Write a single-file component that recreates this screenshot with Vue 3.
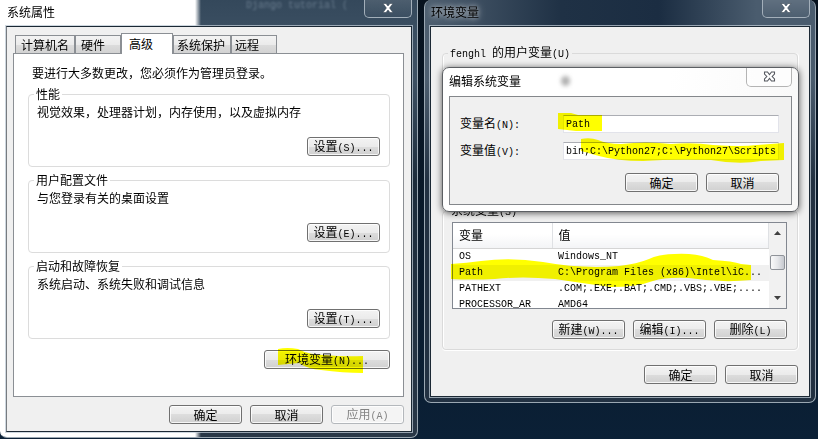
<script setup>
import { ref, onMounted } from 'vue'

const tabs = ['计算机名', '硬件', '高级', '系统保护', '远程']
const activeTab = ref('高级')

const groups = [
  { title: '性能', text: '视觉效果，处理器计划，内存使用，以及虚拟内存', key: 'S' },
  { title: '用户配置文件', text: '与您登录有关的桌面设置', key: 'E' },
  { title: '启动和故障恢复', text: '系统启动、系统失败和调试信息', key: 'T' }
]

const variables = [
  { name: 'OS', value: 'Windows_NT' },
  { name: 'Path', value: 'C:\\Program Files (x86)\\Intel\\iC...' },
  { name: 'PATHEXT', value: '.COM;.EXE;.BAT;.CMD;.VBS;.VBE;....' },
  { name: 'PROCESSOR_AR', value: 'AMD64' }
]
const selected = ref('Path')

const varName = ref('Path')
const varValue = ref('.bin;C:\\Python27;C:\\Python27\\Scripts')
const valueBox = ref(null)

// Show the end of a long value, where new entries are appended.
onMounted(() => {
  valueBox.value.scrollLeft = valueBox.value.scrollWidth
})
</script>

<template>
  <main class="desktop">
    <section class="window props">
      <header class="titlebar">
        <h1>系统属性</h1>
        <span class="ghost" aria-hidden="true">Django tutorial (</span>
        <button class="close" aria-label="关闭">
          <svg width="12" height="10" viewBox="0 0 12 10"><path d="M1 .5h3L6 3 8 .5h3L7.6 5 11 9.500H8L6 7 4 9.500H1L4.400 5z" fill="#fff" stroke="#3d4a58" stroke-width=".6" /></svg>
        </button>
      </header>
      <div class="client props-client">
        <nav class="tabs">
          <button
            v-for="t in tabs"
            :key="t"
            class="tab"
            :class="{ active: t === activeTab }"
            @click="activeTab = t"
          >{{ t }}</button>
        </nav>
        <div class="panel">
          <p class="note">要进行大多数更改，您必须作为管理员登录。</p>
          <div class="groups">
            <fieldset v-for="g in groups" :key="g.key" class="group">
              <legend>{{ g.title }}</legend>
              <p>{{ g.text }}</p>
              <div class="row">
                <button class="btn">设置<span class="latin">({{ g.key }})...</span></button>
              </div>
            </fieldset>
          </div>
          <div class="row env-row">
            <div class="marked">
              <button class="btn wide">环境变量<span class="latin">(N)...</span></button>
              <svg class="marker env-marker" width="88" height="28" viewBox="0 0 88 28">
                <path d="M1 2Q10 0 21 2Q32 8 48 8Q66 10 86 9V26Q66 26 44 23Q31 22 22 16L1 18z" fill="#ff0" />
              </svg>
            </div>
          </div>
        </div>
        <footer class="row props-footer">
          <button class="btn">确定</button>
          <button class="btn">取消</button>
          <button class="btn" disabled>应用<span class="latin">(A)</span></button>
        </footer>
      </div>
    </section>

    <section class="window env">
      <header class="titlebar">
        <h1>环境变量</h1>
        <button class="close" aria-label="关闭">
          <svg width="12" height="10" viewBox="0 0 12 10"><path d="M1 .5h3L6 3 8 .5h3L7.6 5 11 9.500H8L6 7 4 9.500H1L4.400 5z" fill="#fff" stroke="#3d4a58" stroke-width=".6" /></svg>
        </button>
      </header>
      <div class="client env-client">
        <fieldset class="group user-vars">
          <legend><span class="latin">fenghl </span>的用户变量<span class="latin">(U)</span></legend>
        </fieldset>
        <fieldset class="group system-vars">
          <legend>系统变量<span class="latin">(S)</span></legend>
          <div class="list-wrap">
            <div class="list">
              <table>
                <thead>
                  <tr><th class="name-col">变量</th><th>值</th></tr>
                </thead>
                <tbody>
                  <tr
                    v-for="v in variables"
                    :key="v.name"
                    :class="{ selected: v.name === selected }"
                    @click="selected = v.name"
                  >
                    <td>{{ v.name }}</td>
                    <td>{{ v.value }}</td>
                  </tr>
                </tbody>
              </table>
              <div class="scrollbar">
                <svg width="7" height="4" viewBox="0 0 7 4"><path d="M0 4L3.500 0L7 4z" fill="#404040" /></svg>
                <span class="thumb"></span>
                <svg width="7" height="4" viewBox="0 0 7 4"><path d="M0 0L3.500 4L7 0z" fill="#404040" /></svg>
              </div>
            </div>
            <svg class="marker list-marker" width="302" height="36" viewBox="0 0 302 36">
              <path d="M0 11Q16 10 30 8Q60 4 92 9Q130 16 168 13Q186 11 198 6Q210 0 238 1Q252 2 262 7Q282 8 290 11L300 12V27Q270 30 238 25Q214 24 202 28Q186 34 160 34Q130 30 104 26Q70 23 44 26Q20 27 0 26z" fill="#ff0" />
            </svg>
          </div>
          <div class="row">
            <button class="btn">新建<span class="latin">(W)...</span></button>
            <button class="btn">编辑<span class="latin">(I)...</span></button>
            <button class="btn">删除<span class="latin">(L)</span></button>
          </div>
        </fieldset>
        <footer class="row env-footer">
          <button class="btn">确定</button>
          <button class="btn">取消</button>
        </footer>
      </div>

      <section class="dialog" role="dialog" aria-labelledby="edit-title">
        <header class="dialog-title">
          <h2 id="edit-title">编辑系统变量</h2>
          <i class="smudge"></i>
          <button class="close pale" aria-label="关闭">
            <svg width="13" height="11" viewBox="0 0 13 11"><path d="M1.500 1h3l2 2.500L8.500 1h3v2L9.200 5.500l2.300 2.500v2h-3L6.500 7.500 4.500 10h-3V8l2.300-2.500L1.500 3z" fill="#fff" stroke="#55585f" stroke-width="1.100" /></svg>
          </button>
        </header>
        <div class="dialog-body">
          <div class="fields">
            <label for="var-name">变量名<span class="latin">(N):</span></label>
            <div class="marked">
              <input id="var-name" v-model="varName" type="text">
              <svg class="marker name-marker" width="46" height="20" viewBox="0 0 46 20">
                <path d="M0 0H13L20 2H44V18H18L0 16z" fill="#ff0" />
              </svg>
            </div>
            <label for="var-value">变量值<span class="latin">(V):</span></label>
            <div class="marked">
              <input id="var-value" ref="valueBox" v-model="varValue" type="text">
              <svg class="marker value-marker" width="204" height="28" viewBox="0 0 204 28">
                <path d="M0 1Q9 -1 17 2Q26 6 40 6Q66 3 90 6Q112 4 132 7Q160 9 176 7L203 5V22L180 23Q158 27 130 22Q90 21 62 23Q36 23 18 18L0 13z" fill="#ff0" />
              </svg>
            </div>
          </div>
          <footer class="row">
            <button class="btn">确定</button>
            <button class="btn">取消</button>
          </footer>
        </div>
      </section>
    </section>
  </main>
</template>

<style>
body {
  margin: 0;
  background: #0b1e31;
}
</style>

<style scoped>
.desktop {
  display: grid;
  grid-template-columns: 418fr 392fr;
  align-items: start;
  column-gap: 6px;
  box-sizing: border-box;
  min-height: 100vh;
  padding-right: 2px;
  overflow: hidden;
  background: linear-gradient(#07121e, #0b2036);
  color: #000;
  font: 12px/14px "Noto Sans CJK SC", sans-serif;
}

.desktop *,
.desktop *::before {
  box-sizing: border-box;
}

h1,
h2,
p {
  margin: 0;
  font-size: 12px;
  font-weight: 400;
}

button,
input {
  font: inherit;
  color: inherit;
}

.latin,
td,
input {
  font-family: "Liberation Mono", monospace;
  font-size: 10px;
  white-space: pre;
}

.window {
  position: relative;
  min-width: 0;
  padding: 0 5px 5px;
  border: 1px solid #9aa7b2;
  border-top: 0;
  border-radius: 0 0 7px 7px;
}

.props {
  border-left-color: #fff;
  background:
    linear-gradient(90deg, #fff 194px, transparent 200px),
    linear-gradient(#34485b, #3a4e61 28px, #3e5163 80px, #1c2c3b 180px, #283747);
}

.env {
  border-radius: 7px;
  background:
    linear-gradient(transparent 80px, #223142 180px),
    linear-gradient(90deg, #4e5f70, #1f3145 35%, #1b2d42 60%, #4a5c6e 85%);
}

.titlebar {
  display: flex;
  align-items: flex-start;
  height: 26px;
}

.titlebar h1 {
  padding-top: 5px;
  padding-left: 1px;
  text-shadow: 0 0 5px rgba(255, 255, 255, 0.6), 0 0 9px rgba(255, 255, 255, 0.6);
}

.ghost {
  margin-right: 16px;
  margin-left: auto;
  color: #9aacbd;
  font: 10px/12px "Liberation Mono", monospace;
  filter: blur(1px);
  opacity: 0.5;
}

.close {
  display: flex;
  justify-content: center;
  align-items: center;
  width: 48px;
  height: 18px;
  margin-left: auto;
  padding: 0 0 2px;
  border: 1px solid #a3afba;
  border-top: 0;
  border-radius: 0 0 5px 5px;
  background: linear-gradient(rgba(255, 255, 255, 0.12), rgba(255, 255, 255, 0.02));
}

.ghost + .close {
  margin-left: 0;
}

.client {
  border: 1px solid #1b2834;
  background: #f0f0f0;
  box-shadow: 0 0 0 1px rgba(190, 202, 212, 0.75);
}

.props-client {
  padding: 6px 7px 7px 6px;
  border-left-color: #777b80;
}

.tabs {
  display: flex;
  align-items: flex-end;
  padding-left: 2px;
}

.tab {
  min-width: 46px;
  height: 18px;
  padding: 0 5px;
  border: 1px solid #8b8f94;
  border-bottom: 0;
  border-radius: 0;
  background: linear-gradient(#f3f3f3, #ebebeb 50%, #dddddd 50%, #d2d2d2);
  line-height: 18px;
  text-align: left;
}

.tab.active {
  position: relative;
  z-index: 1;
  min-width: 52px;
  height: 21px;
  margin-bottom: -1px;
  padding: 0 7px;
  background: #fff;
}

.tab.active ~ .tab {
  padding: 0 3px;
}

.tab.active + .tab {
  min-width: 58px;
}

.panel {
  padding: 12px 13px 27px 14px;
  border: 1px solid #8b8f94;
  background: #fff;
}

.note {
  padding-left: 4px;
}

.groups {
  display: grid;
  gap: 6px;
  margin-top: 7px;
}

.group {
  min-width: 0;
  margin: 0;
  padding: 4px 9px 10px 8px;
  border: 1px solid #dcdcdc;
  border-radius: 4px;
}

legend {
  margin-left: -3px;
  padding: 0 2px;
  line-height: 14px;
}

.group p {
  margin-bottom: 18px;
}

.row {
  display: flex;
  justify-content: flex-end;
  gap: 8px;
}

.btn {
  width: 73px;
  height: 19px;
  padding: 0;
  border: 1px solid #707070;
  border-radius: 3px;
  background: linear-gradient(#f3f3f3, #ebebeb 50%, #dddddd 50%, #d0d0d0);
  box-shadow: inset 0 0 0 1px rgba(255, 255, 255, 0.8);
  line-height: 16px;
  white-space: nowrap;
}

.btn:disabled {
  border-color: #b4b8bc;
  background: #f4f4f4;
  color: #838383;
}

.btn.wide {
  width: 126px;
}

.env-row {
  margin-top: 11px;
}

.marked {
  position: relative;
  display: flex;
}

.marker {
  position: absolute;
  mix-blend-mode: multiply;
  pointer-events: none;
}

.env-marker {
  top: -3px;
  left: 13px;
}

.props-footer {
  margin-top: 8px;
}

.env-client {
  display: grid;
  padding: 18px 11px 12px;
}

.user-vars {
  min-height: 150px;
  margin-bottom: 8px;
}

.env .group {
  border-color: #dadada;
  box-shadow: inset 1px 0 #fff, 1px 0 #fff, 0 1px #fff;
}

.env .system-vars {
  padding: 2px 10px 10px 9px;
}

.list-wrap {
  position: relative;
  margin-bottom: 11px;
}

.list {
  display: flex;
  height: 87px;
  overflow: hidden;
  border: 1px solid #828790;
  background: #fff;
}

table {
  flex: 1;
  width: 0;
  border-collapse: collapse;
  table-layout: fixed;
}

th {
  height: 25px;
  padding: 0 0 0 6px;
  border-right: 1px solid #dfe1e4;
  border-bottom: 1px solid #d5d5d5;
  background: linear-gradient(#fff 45%, #f3f4f6);
  font-weight: 400;
  text-align: left;
}

.name-col {
  width: 99px;
}

td {
  height: 16px;
  padding: 0 0 0 6px;
  overflow: hidden;
  line-height: 16px;
}

.selected td {
  background: #f0f0f0;
}

.scrollbar {
  display: flex;
  flex-direction: column;
  align-items: center;
  justify-content: space-between;
  width: 17px;
  padding: 8px 0;
  background: #f1f1f1;
}

.thumb {
  width: 15px;
  height: 15px;
  margin-bottom: 6px;
  border: 1px solid #8f9399;
  border-radius: 2px;
  background: linear-gradient(90deg, #fafafa, #e6e7ea 50%, #c6c9cf);
}

.list-marker {
  top: 31px;
  left: -1px;
}

.env-footer {
  margin-top: 15px;
}

.dialog {
  position: absolute;
  top: 67px;
  right: 16px;
  left: 17px;
  padding: 0 6px 6px;
  border: 1px solid #5c5f63;
  border-radius: 7px;
  background: linear-gradient(100deg, #fff 60%, #f8f8f8);
  box-shadow: 0 1px 7px rgba(0, 0, 0, 0.65);
}

.dialog-title {
  position: relative;
  display: flex;
  align-items: flex-start;
  height: 28px;
}

.dialog-title h2 {
  padding-top: 6px;
}

.smudge {
  position: absolute;
  top: 8px;
  left: 112px;
  width: 9px;
  height: 10px;
  border-radius: 50%;
  background: #b0b0b0;
  filter: blur(2px);
}

.pale {
  width: 46px;
  height: 19px;
  border-color: #b4b4b4;
  background: rgba(255, 255, 255, 0.6);
}

.dialog-body {
  padding: 18px 12px 12px 10px;
  border: 1px solid #84878b;
  background: #f0f0f0;
}

.fields {
  display: grid;
  grid-template-columns: 103px 1fr;
  align-items: center;
  row-gap: 9px;
  margin-bottom: 13px;
}

.fields input {
  width: 100%;
  height: 18px;
  padding: 0 2px;
  border: 1px solid #e2e3ea;
  border-top-color: #abadb3;
  border-radius: 0;
  outline: 0;
  background: #fff;
}

.name-marker {
  top: -2px;
  left: -5px;
}

.value-marker {
  top: -4px;
  left: 18px;
}
</style>
